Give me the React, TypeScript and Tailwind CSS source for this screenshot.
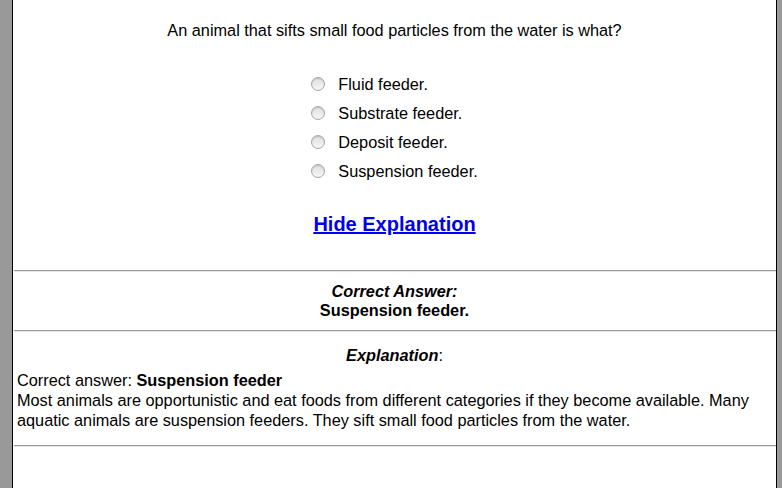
import React from "react";

const options = ["Fluid feeder.", "Substrate feeder.", "Deposit feeder.", "Suspension feeder."];

function Radio() {
  return (
    <span className="inline-block h-[14px] w-[14px] shrink-0 rounded-full border border-[#a6a6a6] bg-gradient-to-b from-[#dedede] to-[#f7f7f7] shadow-[inset_0_1px_1px_rgba(0,0,0,0.15)]" />
  );
}

function Rule() {
  return <div className="h-[2px] border-t border-[#9a9a9a] bg-[#e6e6e6]" />;
}

export default function App() {
  return (
    <div className="flex h-[488px] w-[782px] overflow-hidden bg-[#999999] font-['Liberation_Sans',Arial,sans-serif] text-[16.3px] text-black">
      <div className="w-[12px] shrink-0" />
      <div className="flex flex-1 flex-col border-x border-black bg-white">
        <p className="pt-[21px] text-center leading-[18px]">An animal that sifts small food particles from the water is what?</p>

        <div className="mt-[36px] flex justify-center">
          <div className="flex flex-col gap-[11px]">
            {options.map((option) => (
              <label key={option} className="flex h-[18px] items-center gap-[13px]">
                <Radio />
                <span className="leading-[18px]">{option}</span>
              </label>
            ))}
          </div>
        </div>

        <div className="mt-[33px] text-center">
          <a href="#" className="text-[20px] font-bold leading-[23px] text-[#0000ee] underline">
            Hide Explanation
          </a>
        </div>

        <div className="mt-[33px] pl-[1px]">
          <Rule />
        </div>
        <div className="pt-[10px] pb-[9.5px] text-center font-bold leading-[19px]">
          <div className="italic">Correct Answer:</div>
          <div>Suspension feeder.</div>
        </div>
        <div className="pl-[1px]">
          <Rule />
        </div>
        <div className="pt-[14.5px] text-center leading-[19px]">
          <span className="font-bold italic">Explanation</span>:
        </div>
        <div className="pt-[6px] pl-[4px] pr-[6px] leading-[19.7px]">
          <div>
            Correct answer: <b>Suspension feeder</b>
          </div>
          <div>
            Most animals are opportunistic and eat foods from different categories if they become available. Many aquatic animals are suspension feeders. They sift small food particles from the water.
          </div>
        </div>
        <div className="mt-[14px] pl-[1px]">
          <Rule />
        </div>
      </div>
      <div className="w-[5px] shrink-0" />
    </div>
  );
}
